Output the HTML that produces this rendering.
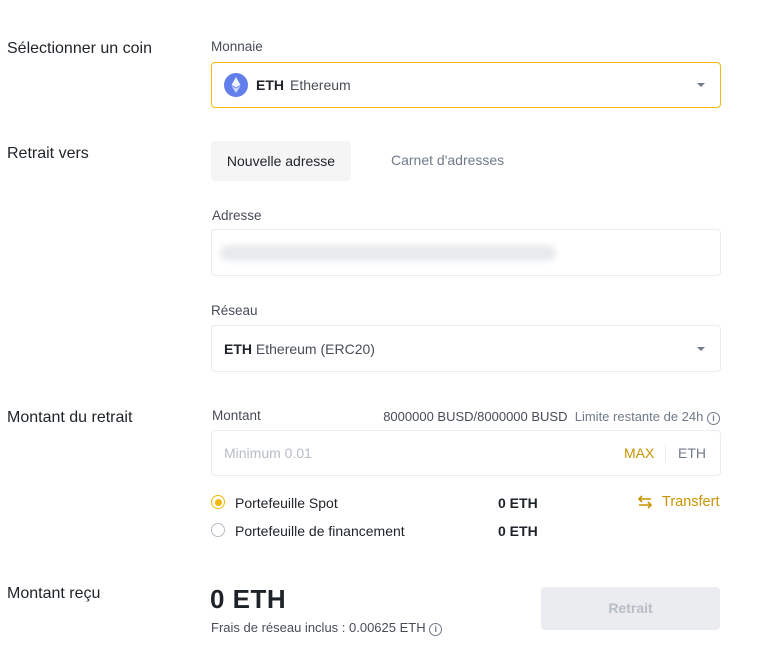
<!DOCTYPE html>
<html><head><meta charset="utf-8"><style>
body{margin:0;width:773px;height:660px;background:#fff;font-family:"Liberation Sans",sans-serif;color:#1e2329;position:relative;overflow:hidden}
.a{position:absolute;white-space:nowrap}
.lbl{font-size:16px;color:#1e2329}
.sm{font-size:13.5px;color:#474d57}
.box{position:absolute;left:211px;width:510px;border:1px solid #eaecef;border-radius:4px;box-sizing:border-box}
.caret{position:absolute;width:0;height:0;border-left:4px solid transparent;border-right:4px solid transparent;border-top:4px solid #707a8a}
.info{display:inline-block;width:11px;height:11px;border:1px solid #707a8a;border-radius:50%;font-size:9px;line-height:11px;text-align:center;color:#707a8a;vertical-align:0px;font-weight:bold}
</style></head><body>
<div class="a lbl" style="left:7px;top:40px">Sélectionner un coin</div>
<div class="a sm" style="left:211px;top:39px">Monnaie</div>
<div class="box" style="top:62px;height:46px;border-color:#f0b90b">
  <div class="a" style="left:12px;top:10px;width:24px;height:24px;border-radius:50%;background:#627eea">
    <svg width="24" height="24" viewBox="0 0 24 24"><path d="M12 4L7.5 12 12 14.5 16.5 12Z" fill="#fff" opacity=".9"/><path d="M12 15.5L7.5 13 12 20 16.5 13Z" fill="#fff" opacity=".7"/></svg>
  </div>
  <div class="a" style="left:44px;top:14px;font-size:14px;font-weight:bold">ETH</div>
  <div class="a" style="left:78px;top:14px;font-size:14px;color:#474d57">Ethereum</div>
  <div class="caret" style="left:485px;top:20px"></div>
</div>
<div class="a lbl" style="left:7px;top:145px">Retrait vers</div>
<div class="a" style="left:211px;top:141px;width:140px;height:40px;background:#f5f5f5;border-radius:4px;font-size:14px;line-height:40px;text-align:center">Nouvelle adresse</div>
<div class="a" style="left:391px;top:152px;font-size:14px;color:#707a8a">Carnet d'adresses</div>
<div class="a sm" style="left:212px;top:208px">Adresse</div>
<div class="box" style="top:229px;height:47px">
  <div class="a" style="left:8px;top:15px;width:336px;height:16px;background:#e8eaed;border-radius:8px;filter:blur(3px)"></div>
</div>
<div class="a sm" style="left:211px;top:303px">Réseau</div>
<div class="box" style="top:325px;height:47px">
  <div class="a" style="left:12px;top:15px;font-size:14px"><b>ETH</b> <span style="color:#474d57">Ethereum (ERC20)</span></div>
  <div class="caret" style="left:485px;top:21px"></div>
</div>
<div class="a lbl" style="left:7px;top:409px">Montant du retrait</div>
<div class="a sm" style="left:212px;top:408px">Montant</div>
<div class="a" style="right:53px;top:409px;font-size:13px"><span style="color:#474d57">8000000 BUSD/8000000 BUSD</span>&nbsp; <span style="color:#707a8a">Limite restante de 24h</span> <span class="info">i</span></div>
<div class="box" style="top:430px;height:46px">
  <div class="a" style="left:12px;top:14px;font-size:14px;color:#b7bdc6">Minimum 0.01</div>
  <div class="a" style="left:412px;top:14px;font-size:14px;color:#c99400">MAX</div>
  <div class="a" style="left:453px;top:14px;width:1px;height:17px;background:#eaecef"></div>
  <div class="a" style="left:466px;top:14px;font-size:14px;color:#707a8a">ETH</div>
</div>
<div class="a" style="left:211px;top:495px;width:12px;height:12px;border:1.5px solid #f0b90b;border-radius:50%"></div>
<div class="a" style="left:215px;top:499px;width:7px;height:7px;background:#f0b90b;border-radius:50%"></div>
<div class="a" style="left:235px;top:495px;font-size:14px">Portefeuille Spot</div>
<div class="a" style="left:498px;top:495px;font-size:14px;font-weight:bold">0 ETH</div>
<div class="a" style="left:211px;top:523px;width:12px;height:12px;border:1.5px solid #b7bdc6;border-radius:50%"></div>
<div class="a" style="left:235px;top:523px;font-size:14px">Portefeuille de financement</div>
<div class="a" style="left:498px;top:523px;font-size:14px;font-weight:bold">0 ETH</div>
<svg class="a" style="left:637px;top:494px" width="16" height="16" viewBox="0 0 16 16" fill="none" stroke="#c99400" stroke-width="1.6"><path d="M2 5h12M5 2L2 5l3 3M14 11H2M11 8l3 3-3 3"/></svg>
<div class="a" style="left:662px;top:494px;font-size:14.5px;color:#c99400">Transfert</div>
<div class="a lbl" style="left:7px;top:585px">Montant reçu</div>
<div class="a" style="left:210px;top:584px;font-size:26px;font-weight:bold;letter-spacing:.5px">0 ETH</div>
<div class="a" style="left:211px;top:620px;font-size:13px;color:#474d57">Frais de réseau inclus : 0.00625 ETH <span class="info">i</span></div>
<div class="a" style="left:541px;top:587px;width:179px;height:43px;background:#eaecef;border-radius:4px;font-size:14px;line-height:43px;text-align:center;color:#b7bdc6;font-weight:bold">Retrait</div>
</body></html>
